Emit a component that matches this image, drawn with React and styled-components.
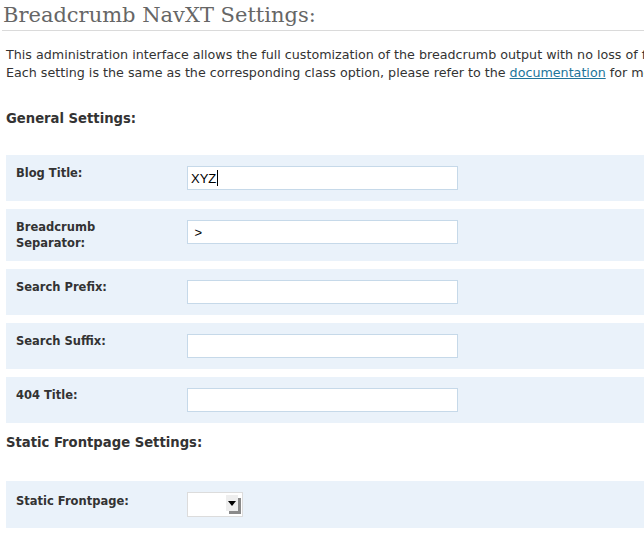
import React from 'react';
import styled, {createGlobalStyle} from 'styled-components';

const GlobalStyle = createGlobalStyle`
    html, body {
        margin: 0;
        padding: 0;
        background: #fff;
        overflow: hidden;
    }
    body {
        font-family: "DejaVu Sans", Verdana, sans-serif;
        color: #333;
    }
`;

const general = [
    {id: 'blog', label: 'Blog Title:', value: 'XYZ', caret: true},
    {id: 'sep', label: 'Breadcrumb Separator:', value: ' >'},
    {id: 'sprefix', label: 'Search Prefix:', value: ''},
    {id: 'ssuffix', label: 'Search Suffix:', value: ''},
    {id: 'e404', label: '404 Title:', value: ''},
];

export default function App() {
    return (
        <>
            <GlobalStyle />
            <Wrap>
                <Title>Breadcrumb NavXT Settings:</Title>
                <Content>
                    <Intro>
                        This administration interface allows the full customization of the breadcrumb output with no loss of functionality when compared to manual configuration.
                        <br />
                        Each setting is the same as the corresponding class option, please refer to the <Link href="#">documentation</Link> for more detailed explanation of each setting.
                    </Intro>

                    <Section>General Settings:</Section>
                    <Table>
                        {general.map((row) => (
                            <Row key={row.id}>
                                <Label htmlFor={row.id}>{row.label}</Label>
                                <Field>
                                    <InputBox>
                                        <Input id={row.id} type="text" defaultValue={row.value} />
                                        {row.caret && <Caret />}
                                    </InputBox>
                                </Field>
                            </Row>
                        ))}
                    </Table>

                    <Section $tight>Static Frontpage Settings:</Section>
                    <Table>
                        <Row>
                            <Label htmlFor="front" $low>Static Frontpage:</Label>
                            <Field>
                                <SelectBox>
                                    <Select id="front">
                                        <option></option>
                                    </Select>
                                </SelectBox>
                            </Field>
                        </Row>
                    </Table>
                </Content>
            </Wrap>
        </>
    );
}

const Wrap = styled.div`
    width: 1100px;
`;

const Title = styled.h2`
    margin: 0 0 0 2px;
    padding: 0 0 0 1px;
    font-family: Georgia, "DejaVu Serif", serif;
    font-weight: normal;
    font-size: 21px;
    line-height: 30px;
    color: #666;
    border-bottom: 1px solid #dadada;
`;

const Content = styled.div`
    padding-left: 6px;
`;

const Intro = styled.p`
    margin: 15px 0 0;
    font-size: 12.7px;
    line-height: 18px;
    color: #333;
    white-space: nowrap;
`;

const Link = styled.a`
    color: #21759b;
    text-decoration: underline;
`;

const Section = styled.h3`
    margin: ${(p) => (p.$tight ? '10px' : '27px')} 0 ${(p) => (p.$tight ? '28px' : '26px')};
    font-size: 13.2px;
    line-height: 20px;
    font-weight: bold;
    color: #333;
`;

const Table = styled.div`
    display: flex;
    flex-direction: column;
    gap: 8px;
`;

const Row = styled.div`
    display: flex;
    align-items: flex-start;
    background: #eaf2fa;
`;

const Label = styled.label`
    box-sizing: border-box;
    width: 181px;
    padding: ${(p) => (p.$low ? '12px' : '10px')} 36px 10px 10px;
    font-size: 11.5px;
    line-height: 16px;
    font-weight: bold;
    color: #333;
`;

const Field = styled.div`
    padding: 11px 10px 11px 0;
`;

const InputBox = styled.div`
    position: relative;
    width: 271px;
`;

const Input = styled.input`
    box-sizing: border-box;
    display: block;
    width: 271px;
    height: 24px;
    margin: 0;
    padding: 0 3px;
    border: 1px solid #c6d9e9;
    background: #fff;
    font-family: "Liberation Sans", Arial, sans-serif;
    font-size: 13px;
    color: #000;
    outline: none;
`;

const Caret = styled.span`
    position: absolute;
    left: 30px;
    top: 4px;
    width: 1px;
    height: 16px;
    background: #000;
`;

const SelectBox = styled.div`
    position: relative;
    width: 56px;
    height: 25px;
    &::after {
        content: '';
        position: absolute;
        left: 39px;
        top: 3px;
        width: 12px;
        height: 16px;
        background: #eee;
        box-shadow: 3px 3px 0 #8a8a8a;
        pointer-events: none;
    }
    &::before {
        content: '';
        position: absolute;
        left: 41px;
        top: 9px;
        border-left: 4px solid transparent;
        border-right: 4px solid transparent;
        border-top: 5px solid #000;
        z-index: 1;
        pointer-events: none;
    }
`;

const Select = styled.select`
    box-sizing: border-box;
    display: block;
    width: 56px;
    height: 25px;
    margin: 0;
    border: 1px solid #dcdcdc;
    background: #fff;
    appearance: none;
    -webkit-appearance: none;
    border-radius: 0;
    outline: none;
`;
